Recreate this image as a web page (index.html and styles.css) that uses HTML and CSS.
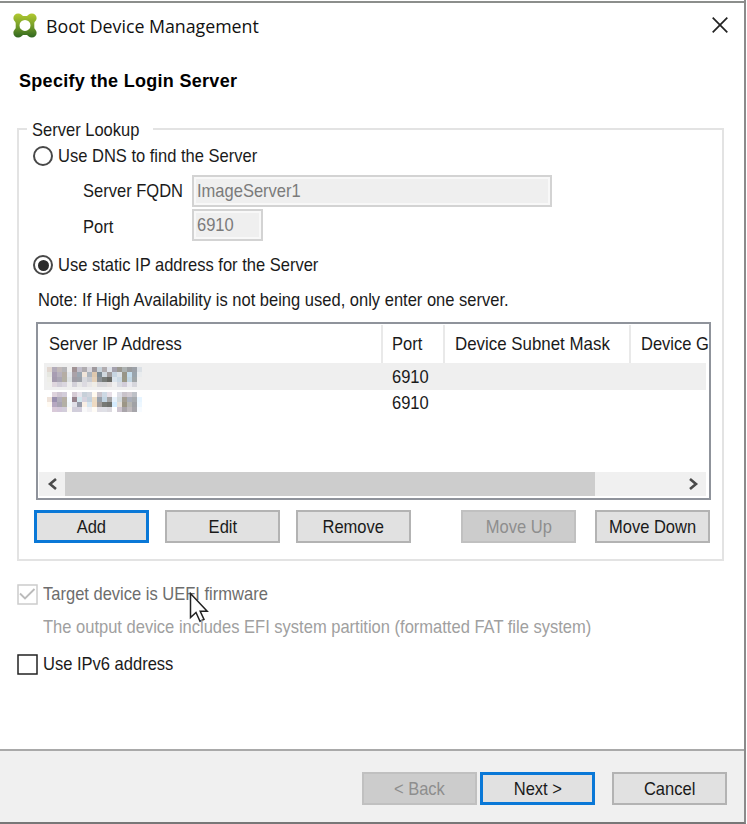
FILE: index.html
```html
<!DOCTYPE html>
<html lang="en">
<head>
<meta charset="utf-8">
<title>Boot Device Management</title>
<link rel="stylesheet" href="styles.css">
</head>
<body>
<div class="window">
  <header class="titlebar">
    <svg class="logo" width="24" height="25" viewBox="0 0 24 25">
      <defs><linearGradient id="g" x1="0" y1="0" x2="0" y2="1"><stop offset="0" stop-color="#b2c931"/><stop offset=".45" stop-color="#7da42a"/><stop offset="1" stop-color="#2f6620"/></linearGradient></defs>
      <path fill="url(#g)" fill-rule="evenodd" d="M5.200 .4C8 .4 8.800 2.200 10 3H14C15.200 2.200 16 .4 18.800 .4A4.700 4.700 0 0 1 23.600 5.100C23.600 8 21.300 8.500 21.300 10.500V14.500C21.300 16.500 23.600 17 23.600 19.900A4.700 4.700 0 0 1 18.800 24.600C16 24.600 15.200 22.800 14 22H10C8.800 22.800 8 24.600 5.200 24.600A4.700 4.700 0 0 1 .4 19.900C.4 17 2.700 16.500 2.700 14.500V10.500C2.700 8.500 .4 8 .4 5.100A4.700 4.700 0 0 1 5.200 .4ZM12 6.900A5.500 5.500 0 1 0 12 17.900A5.500 5.500 0 1 0 12 6.900Z"/>
    </svg>
    <span class="title">Boot Device Management</span>
    <svg class="close" width="16" height="16" viewBox="0 0 16 16"><path d="M.7.7l14.600 14.600M15.300.7L.7 15.300" stroke="#222" stroke-width="1.700" fill="none"/></svg>
  </header>

  <h1>Specify the Login Server</h1>

  <section class="group">
    <div class="legend"><span class="t">Server Lookup</span></div>
    <label class="option"><i class="radio"></i><span class="t">Use DNS to find the Server</span></label>
    <div class="field"><span class="t name">Server FQDN</span><div class="input wide"><span class="t">ImageServer1</span></div></div>
    <div class="field second"><span class="t name port">Port</span><div class="input short"><span class="t">6910</span></div></div>
    <label class="option static"><i class="radio on"></i><span class="t">Use static IP address for the Server</span></label>
    <p class="note"><span class="t">Note: If High Availability is not being used, only enter one server.</span></p>

    <div class="list">
      <div class="row head">
        <div><span class="t">Server IP Address</span></div><div><span class="t">Port</span></div><div><span class="t mask">Device Subnet Mask</span></div><div><span class="t">Device G</span></div>
      </div>
      <div class="row selected"><div><div class="mosaic" id="ip1"></div></div><div><span class="t">6910</span></div></div>
      <div class="row"><div><div class="mosaic" id="ip2"></div></div><div><span class="t">6910</span></div></div>
      <div class="scroll">
        <svg width="26" height="24" viewBox="0 0 26 24"><path d="M17 7l-6 5 6 5" /></svg>
        <div class="thumb"></div>
        <svg width="26" height="24" viewBox="0 0 26 24"><path d="M10 7l6 5-6 5" /></svg>
      </div>
    </div>

    <div class="buttons">
      <div class="btn primary"><span class="t">Add</span></div>
      <div class="btn"><span class="t">Edit</span></div>
      <div class="btn"><span class="t">Remove</span></div>
      <div class="btn off up"><span class="t">Move Up</span></div>
      <div class="btn"><span class="t">Move Down</span></div>
    </div>
  </section>

  <label class="check dim"><svg width="21" height="21" viewBox="0 0 21 21"><rect x="1" y="1" width="19" height="19" fill="#fff" stroke="#ccc" stroke-width="1.500"/><path d="M3 9.500l5 5L17.500 5" fill="none" stroke="#bbb" stroke-width="1.900"/></svg><span class="t">Target device is UEFI firmware</span>
    <svg class="cursor" width="20" height="31" viewBox="0 0 20 31"><path d="M1.500 1.500V25.500L7 20.500L11 29.200L15 27.400L11.200 19.200H18.200Z" fill="#fff" stroke="#222" stroke-width="1.500"/></svg>
  </label>
  <p class="hint"><span class="t">The output device includes EFI system partition (formatted FAT file system)</span></p>
  <label class="check"><svg width="21" height="21" viewBox="0 0 21 21"><rect x="1" y="1" width="19" height="19" fill="#fff" stroke="#222" stroke-width="1.500"/></svg><span class="t">Use IPv6 address</span></label>

  <footer>
    <div class="btn off"><span class="t">&lt; Back</span></div>
    <div class="btn primary"><span class="t">Next &gt;</span></div>
    <div class="btn cancel"><span class="t">Cancel</span></div>
  </footer>
</div>
<script src="mosaic.js"></script>
</body>
</html>
```
FILE: mosaic.js
```js
const blocks = {
  ip1: [
    "e2d8d1 b3acba c1b9b9 b5b4b7 eeeeee a19395 c2bfcb b0acb0 dad9df a09a9e c9d3db b2adb0 dfe3ea a5a2ae 9b9992 adb2b2 9a9c9e 9ca1a8 dbe0e5",
    "e6e7e1 a89db2 b7b1bd b5ada4 e1e5ea aaa2a8 9ba6b1 f0e5da aeb6bf dec8ae 7d8b95 d0d8df a09c9d c7d5e1 dce2e8 989588 c4dcec 9aa4ac e9ecee",
    "eeeee9 a59bae aaa6b4 b3afa4 dce0e2 a09da6 9da1a8 d8d9de c9cbd1 e3d0b9 8b9196 777b78 686965 dbe4ec cbd9e4 9a9887 c1d5e2 a0a6a8 eeeeee",
    "efefed dfd7de d2ced8 dad6df eeeeee d3d1d9 e7e7e7 dcdae1 e7e6e7 efede7 d9d8dc d9d9dc e2dede efefef d9dbe2 d2cdda e9e9ef d6d6dc efefef"
  ],
  ip2: [
    "ffffff ded3dc cfc5d2 d3cdda ffffff d5cbd5 e8e4ec c7d0d9 d1d5de fffaf0 c9c3cb cdd9e4 e7dfe7 ffffff dddee6 c9c3ca d2ccd2 bec1c7 ffffff",
    "efe3da 9a90ae b1adbb b6afa4 f5faff 96828c d2e5ed d7d3df c4d1dc ebdbc5 98a1ab c2d4e2 a4a4a5 e7f1fb d3dadd a39d92 a9aeb9 a7aaae e8f5ff",
    "fffaf2 b6a8c1 a9a4b3 b3b0a5 f2f7fa e0dfe7 979ba9 f8eee4 d6e5ef eedac2 a09c9b 777975 6f716d d4ebfd e6e1dc 9c9686 b6b6b2 a0a2a6 edf7ff",
    "ffffff d9cad9 d4c8da d2cdda fcfaf5 d1cedb d2cedb f9f9fa f1f0f3 fffcf6 e0dee5 dfe0e6 dbd9df ffffff cec6d1 a9a5aa bfbabd a6a5aa f7fbff"
  ]
};
for (const [id, rows] of Object.entries(blocks)) {
  const box = document.getElementById(id);
  for (const color of rows.join(" ").split(" ")) {
    const cell = document.createElement("i");
    cell.style.background = "#" + color;
    box.append(cell);
  }
}
```
FILE: styles.css
```css
* { box-sizing: border-box; }
body { margin: 0; background: #fff; font: 18.400px/24px "Liberation Sans", Arial, sans-serif; color: #1a1a1a; }
p, h1 { margin: 0; }
.t { display: inline-block; white-space: nowrap; transform: scaleX(.898); transform-origin: 0 50%; }
.mask { transform: scaleX(.918); }

.window { width: 746px; height: 824px; padding-top: 1px; display: flex; flex-direction: column; border-right: 2px solid #8b8b8b; border-bottom: 2px solid #777; background: #fff; }
.window::before { content: ""; height: 2px; flex: none; background: #8c8e8c; }

.titlebar { display: flex; align-items: center; height: 47px; padding: 0 16px 3px 13px; }
.title { margin-left: 9px; font: 17.800px/24px "Open Sans", sans-serif; letter-spacing: -.02px; color: #111; padding-top: 2px; }
.close { margin-left: auto; }
h1 { font-size: 18px; line-height: 24px; font-weight: bold; letter-spacing: .3px; margin: 19px 0 0 19px; color: #000; }

.group { width: 707px; height: 433px; margin: 35px 0 0 17px; border: 2px solid #e3e3e3; padding: 0 10px 0 15px; flex: none; }
.legend { width: 126px; height: 24px; margin: -12px 0 0 -7px; padding-left: 5px; background: #fff; }
.option { display: flex; align-items: center; gap: 5px; height: 24px; margin-top: 2px; margin-left: -1px; }
.radio { width: 20px; height: 20px; border: 2px solid #484848; border-radius: 50%; display: grid; place-items: center; }
.radio.on::after { content: ""; width: 11px; height: 11px; border-radius: 50%; background: #2b2b2b; }
.field { display: flex; align-items: center; height: 32px; margin: 7px 0 0 49px; }
.second { margin-top: 2px; }
.name { width: 109px; flex: none; }
.port { padding-top: 3px; }
.input { height: 32px; border: 2px solid #d3d3d3; background: #efefef; box-shadow: inset 0 0 0 2px #f8f8f8; color: #7b7b7b; padding: 2px 0 0 3px; line-height: 24px; }
.wide { width: 360px; }
.short { width: 71px; }
.static { margin-top: 12px; }
.note { height: 24px; margin: 11px 0 0 4px; }

.list { width: 675px; height: 178px; margin: 10px 0 0 2px; border: 2px solid #8f939b; padding: 1px; display: flex; flex-direction: column; overflow: hidden; }
.row { display: grid; grid-template-columns: 344px 62px 186px 79px; height: 26px; align-items: center; flex: none; }
.row > div { padding-left: 9px; }
.row.head { height: 38px; }
.row.head > div { height: 38px; padding-top: 7px; border-right: 2px solid #e9e9e9; overflow: hidden; }
.row.head > div:last-child { border: 0; }
.row.selected { background: #efefef; margin-right: 2px; margin-left: 5px; grid-template-columns: 339px 62px 186px 1fr; height: 27px; }
.row > div:first-child { padding-left: 8px; }
.row.selected > div:first-child { padding-left: 3px; }
.row.head > div:first-child { padding-left: 10px; }
.row.head > div:nth-child(n+3) { padding-left: 10px; }
.mosaic { display: grid; grid-template-columns: repeat(19, 5px); grid-auto-rows: 5px; }
#ip2 { margin-top: -2px; }
.scroll { display: flex; height: 24px; margin: auto 2px 1px 0; background: #f0f0f0; }
.scroll path { fill: none; stroke: #4b4b4b; stroke-width: 2.600; }
.thumb { width: 530px; background: #cdcdcd; margin-right: auto; }

.buttons { display: flex; margin-top: 10px; gap: 16px; }
.btn { width: 115px; height: 33px; border: 2px solid #b3b3b3; background: #e1e1e1; display: flex; align-items: center; justify-content: center; }
.btn .t { transform-origin: 50% 50%; }
.primary { border: 3px solid #0a78d7; }
.off { background: #cccccc; border-color: #c0c0c0; color: #8e8e8e; }
.up { margin-left: 34px; margin-right: 3px; }

.check { display: flex; align-items: center; height: 24px; gap: 5px; margin: 21px 0 0 17px; position: relative; flex: none; }
.dim { color: #6d6d6d; }
.cursor { position: absolute; left: 172px; top: 10px; }
.hint { color: #a0a0a0; margin: 9px 0 0 43px; }
.hint + .check { margin-top: 13px; }

footer { margin-top: auto; height: 73px; background: #f0f0f0; border-top: 2px solid #a9a9a9; display: flex; padding: 21px 0 0 362px; flex: none; gap: 3px; }
.cancel { margin-left: 14px; }
```
